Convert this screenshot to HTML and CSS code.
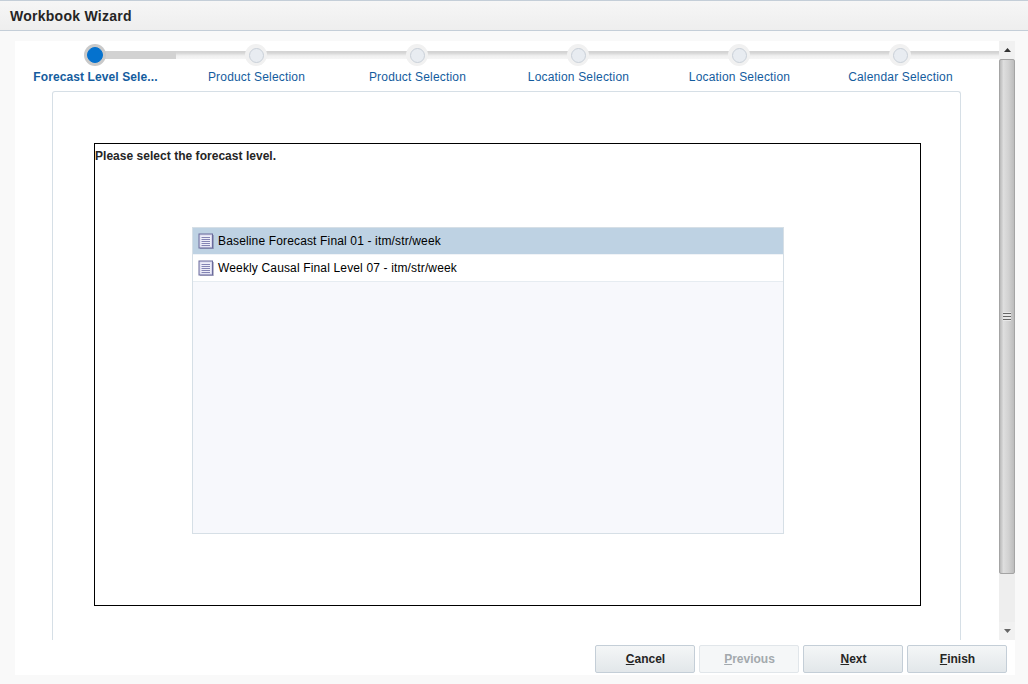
FILE: index.html
```html
<!DOCTYPE html>
<html lang="en">
<head>
<meta charset="utf-8">
<title>Workbook Wizard</title>
<link rel="stylesheet" href="styles.css">
</head>
<body>
<header class="title-bar"><h1 class="title">Workbook Wizard</h1></header>
<main class="page">
  <div class="sheet">
    <div class="scroller">
      <div class="content">
        <nav class="train">
          <div class="band"><div class="band-done"></div></div>
          <div class="stops">
            <div class="stop stop-active"><span class="dot"><span class="dot-core"></span></span><span class="stop-label">Forecast Level Sele...</span></div>
            <div class="stop"><span class="dot"><span class="dot-core"></span></span><span class="stop-label">Product Selection</span></div>
            <div class="stop"><span class="dot"><span class="dot-core"></span></span><span class="stop-label">Product Selection</span></div>
            <div class="stop"><span class="dot"><span class="dot-core"></span></span><span class="stop-label">Location Selection</span></div>
            <div class="stop"><span class="dot"><span class="dot-core"></span></span><span class="stop-label">Location Selection</span></div>
            <div class="stop"><span class="dot"><span class="dot-core"></span></span><span class="stop-label">Calendar Selection</span></div>
          </div>
        </nav>
        <section class="panel">
          <div class="box">
            <p class="prompt">Please select the forecast level.</p>
            <div class="list">
              <div class="row row-selected">
                <svg class="doc" width="16" height="16" viewBox="0 0 16 16"><rect x="2" y="2" width="14" height="14" fill="#55557f" opacity=".4"/><rect x="1" y="1" width="13.5" height="14" fill="#d8d8ee" stroke="#6a6a9c"/><rect x="2.5" y="2.5" width="10.5" height="11" fill="#eeeef8"/><path d="M3.5 4.5h8.5M3.5 6.5h8.5M3.5 8.5h8.5M3.5 10.5h8.5M3.5 12.5h8.5" stroke="#8484b4" fill="none"/></svg>
                <span>Baseline Forecast Final 01 - itm/str/week</span>
              </div>
              <div class="row">
                <svg class="doc" width="16" height="16" viewBox="0 0 16 16"><rect x="2" y="2" width="14" height="14" fill="#55557f" opacity=".4"/><rect x="1" y="1" width="13.5" height="14" fill="#d8d8ee" stroke="#6a6a9c"/><rect x="2.5" y="2.5" width="10.5" height="11" fill="#eeeef8"/><path d="M3.5 4.5h8.5M3.5 6.5h8.5M3.5 8.5h8.5M3.5 10.5h8.5M3.5 12.5h8.5" stroke="#8484b4" fill="none"/></svg>
                <span>Weekly Causal Final Level 07 - itm/str/week</span>
              </div>
            </div>
          </div>
        </section>
      </div>
      <div class="scrollbar">
        <div class="arrow"><svg width="7" height="4" viewBox="0 0 7 4"><path d="M3.5 0L7 4H0z" fill="#333"/></svg></div>
        <div class="thumb"><span class="grip"></span></div>
        <div class="arrow arrow-down"><svg width="7" height="4" viewBox="0 0 7 4"><path d="M0 0h7L3.5 4z" fill="#666"/></svg></div>
      </div>
    </div>
    <footer class="actions">
      <button class="btn" type="button"><u>C</u>ancel</button>
      <button class="btn btn-disabled" type="button"><u>P</u>revious</button>
      <button class="btn" type="button"><u>N</u>ext</button>
      <button class="btn" type="button"><u>F</u>inish</button>
    </footer>
  </div>
</main>
</body>
</html>
```
FILE: styles.css
```css
* { box-sizing: border-box; }
html, body { margin: 0; height: 684px; overflow: hidden; }
body {
  background: #f9f9f9;
  font-family: "Liberation Sans", Arial, sans-serif;
  font-size: 12px;
  color: #000;
}
.title-bar {
  height: 31px;
  display: flex;
  align-items: center;
  padding: 0 10px;
  background: linear-gradient(#f6f6f6, #eeeeee);
  border-top: 1px solid #c4ced8;
  border-bottom: 1px solid #c4ced8;
}
.title { margin: 0; font-size: 14px; font-weight: bold; color: #252525; letter-spacing: 0.26px; }
.page { padding: 10px 13px 0 15px; }
.sheet { background: #fff; height: 634px; display: flex; flex-direction: column; }
.scroller { display: flex; height: 599px; }
.content { width: 984px; overflow: hidden; }
.train { position: relative; height: 50px; padding-top: 3px; }
.band {
  position: absolute;
  left: 80px;
  right: 0;
  top: 10px;
  height: 8px;
  background: linear-gradient(#d2d2d2 0, #d6d6d6 25%, #f0f0f0 60%, #f5f5f5 100%);
}
.band-done { width: 81px; height: 8px; background: #d2d2d2; }
.stops { position: relative; display: grid; grid-template-columns: repeat(6, 161px); }
.stop { display: flex; flex-direction: column; align-items: center; }
.dot {
  width: 22px;
  height: 22px;
  margin-right: 1px;
  border-radius: 50%;
  background: #f1f1f1;
  display: flex;
  align-items: center;
  justify-content: center;
}
.dot-core {
  width: 15px;
  height: 15px;
  border-radius: 50%;
  background: #e8ecf1;
  border: 1px solid #c9d0d8;
}
.stop-active .dot { background: #c9c9c9; }
.stop-active .dot-core { width: 16px; height: 16px; background: #0572ce; border-color: #0572ce; }
.stop-label { margin-top: 4px; line-height: 14px; color: #145c9e; white-space: nowrap; letter-spacing: 0.18px; }
.stop-active .stop-label { font-weight: bold; letter-spacing: 0.1px; }
.panel {
  margin-left: 37px;
  width: 909px;
  height: 549px;
  padding: 51px 0 0 41px;
  border: 1px solid #d6dfe6;
  border-bottom: 0;
  border-radius: 3px 3px 0 0;
}
.box {
  width: 827px;
  height: 463px;
  border: 1px solid #000;
  padding-top: 6px;
}
.prompt { margin: 0; line-height: 13px; font-weight: bold; color: #252525; letter-spacing: 0.03px; }
.list {
  width: 592px;
  height: 307px;
  margin: 64px 0 0 97px;
  background: #f7f8fc;
  border: 1px solid #d6dfe6;
}
.row {
  height: 27px;
  display: flex;
  align-items: center;
  gap: 4px;
  padding-left: 5px;
  background: #fff;
  border-bottom: 1px solid #e6ecf1;
  letter-spacing: 0.15px;
}
.row-selected { background: #bed2e3; border-bottom-color: #f0f3f7; }
.doc { flex: none; }
.scrollbar { width: 16px; display: flex; flex-direction: column; background: #eeeeee; }
.arrow { height: 18px; display: flex; align-items: center; justify-content: center; background: #f1f1f1; }
.arrow-down { margin-top: auto; }
.thumb {
  height: 515px;
  display: flex;
  align-items: center;
  justify-content: center;
  background: linear-gradient(90deg, #b9b9b9 0, #dedede 25%, #d2d2d2 60%, #bcbcbc 100%);
  border: 1px solid #a4a4a4;
  border-radius: 2px;
}
.grip {
  width: 8px;
  height: 9px;
  background: repeating-linear-gradient(#e8e8e8 0, #e8e8e8 1px, #666 1px, #666 2px, #e8e8e8 2px, #e8e8e8 3px);
}
.actions {
  height: 35px;
  display: flex;
  justify-content: flex-end;
  align-items: flex-start;
  gap: 4px;
  padding: 5px 8px 0 0;
}
.btn {
  width: 100px;
  height: 28px;
  padding: 0 0 0 1px;
  font-family: inherit;
  font-size: 12px;
  font-weight: bold;
  color: #252525;
  background: linear-gradient(#f4f6f7, #e2e7ea);
  border: 1px solid #c4ced7;
  border-radius: 2px;
}
.btn-disabled { color: #a3a9ad; background: #f5f7f8; border-color: #e1e6ea; }
```
